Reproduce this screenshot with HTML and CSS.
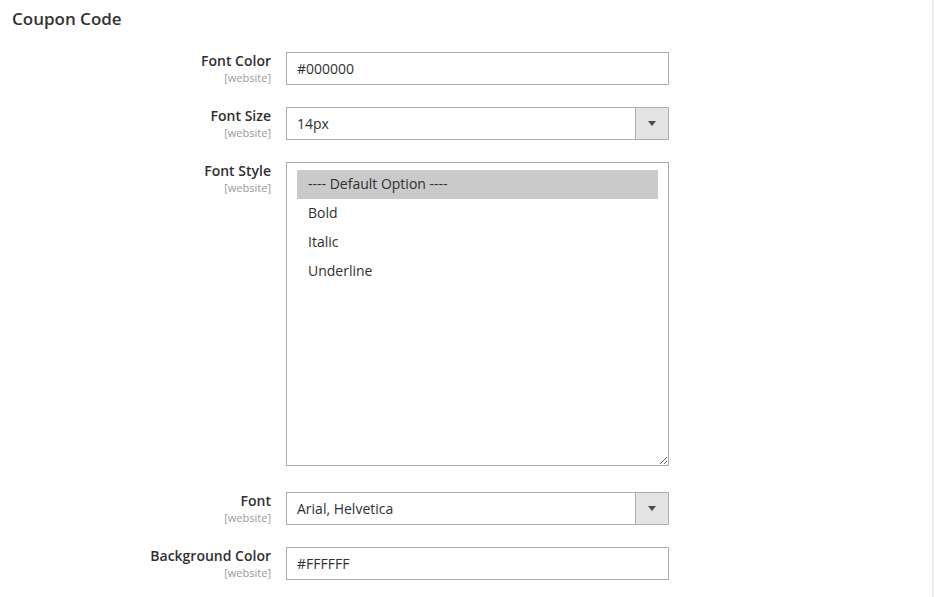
FILE: index.html
```html
<!DOCTYPE html>
<html lang="en">
<head>
    <meta charset="UTF-8">
    <meta name="viewport" content="width=device-width, initial-scale=1.0">
    <title>Coupon Code</title>
    <link rel="stylesheet" href="styles.css">
</head>
<body>

<div class="page">
    <!-- Section title -->
    <h2 class="section-title">Coupon Code</h2>

    <!-- Font Color -->
    <div class="field">
        <label class="field-label" for="font-color">
            <span>Font Color</span>
            <span class="scope">[website]</span>
        </label>
        <input type="text" id="font-color" class="text-input" value="#000000">
    </div>

    <!-- Font Size -->
    <div class="field">
        <label class="field-label">
            <span>Font Size</span>
            <span class="scope">[website]</span>
        </label>
        <div class="select-box">
            <span class="select-value">14px</span>
            <span class="select-button"><span class="arrow"></span></span>
        </div>
    </div>

    <!-- Font Style (multiselect) -->
    <div class="field field-multi">
        <label class="field-label">
            <span>Font Style</span>
            <span class="scope">[website]</span>
        </label>
        <div class="multiselect">
            <div class="option selected">---- Default Option ----</div>
            <div class="option">Bold</div>
            <div class="option">Italic</div>
            <div class="option">Underline</div>
        </div>
    </div>

    <!-- Font -->
    <div class="field">
        <label class="field-label">
            <span>Font</span>
            <span class="scope">[website]</span>
        </label>
        <div class="select-box">
            <span class="select-value">Arial, Helvetica</span>
            <span class="select-button"><span class="arrow"></span></span>
        </div>
    </div>

    <!-- Background Color -->
    <div class="field">
        <label class="field-label" for="bg-color">
            <span>Background Color</span>
            <span class="scope">[website]</span>
        </label>
        <input type="text" id="bg-color" class="text-input" value="#FFFFFF">
    </div>
</div>

</body>
</html>
```

FILE: styles.css
```css
body {
    margin: 0;
    background-color: #fff;
    font-family: "Open Sans", "Liberation Sans", Arial, sans-serif;
    color: #303030;
}

.page {
    width: 932px;
    height: 597px;
    border-right: 2px solid #eeeeee;
    overflow: hidden;
}

.section-title {
    margin: 0 0 22px 12px;
    padding-top: 8px;
    font-size: 17px;
    line-height: 22px;
    font-weight: 600;
    color: #333;
}

/* Form rows */
.field {
    display: grid;
    grid-template-columns: 271px 383px;
    column-gap: 15px;
    margin-bottom: 22px;
}

.field-multi {
    margin-bottom: 26px;
}

.field-label {
    display: flex;
    flex-direction: column;
    align-items: flex-end;
    margin-top: -1px;
    font-size: 14px;
    line-height: 19px;
    font-weight: 600;
    color: #303030;
}

.scope {
    font-size: 11px;
    line-height: 15px;
    font-weight: 400;
    color: #999;
}

.text-input {
    box-sizing: border-box;
    width: 383px;
    height: 33px;
    margin: 0;
    padding: 0 10px;
    border: 1px solid #adadad;
    border-radius: 0;
    font-family: inherit;
    font-size: 14px;
    color: #303030;
    outline: none;
}

/* Dropdown */
.select-box {
    box-sizing: border-box;
    display: flex;
    height: 33px;
    border: 1px solid #adadad;
    background-color: #fff;
}

.select-value {
    flex: 1;
    padding-left: 10px;
    font-size: 14px;
    line-height: 31px;
}

.select-button {
    display: flex;
    align-items: center;
    justify-content: center;
    width: 32px;
    border-left: 1px solid #adadad;
    background-color: #e3e3e3;
}

.arrow {
    width: 0;
    height: 0;
    border-left: 4px solid transparent;
    border-right: 4px solid transparent;
    border-top: 5px solid #514943;
}

/* Multiselect */
.multiselect {
    box-sizing: border-box;
    height: 304px;
    padding: 7px 10px;
    border: 1px solid #adadad;
    background-color: #fff;
    overflow: auto;
    resize: vertical;
}

.option {
    height: 29px;
    padding-left: 11px;
    font-size: 14px;
    line-height: 28px;
}

.option.selected {
    background-color: #cacaca;
}
```
